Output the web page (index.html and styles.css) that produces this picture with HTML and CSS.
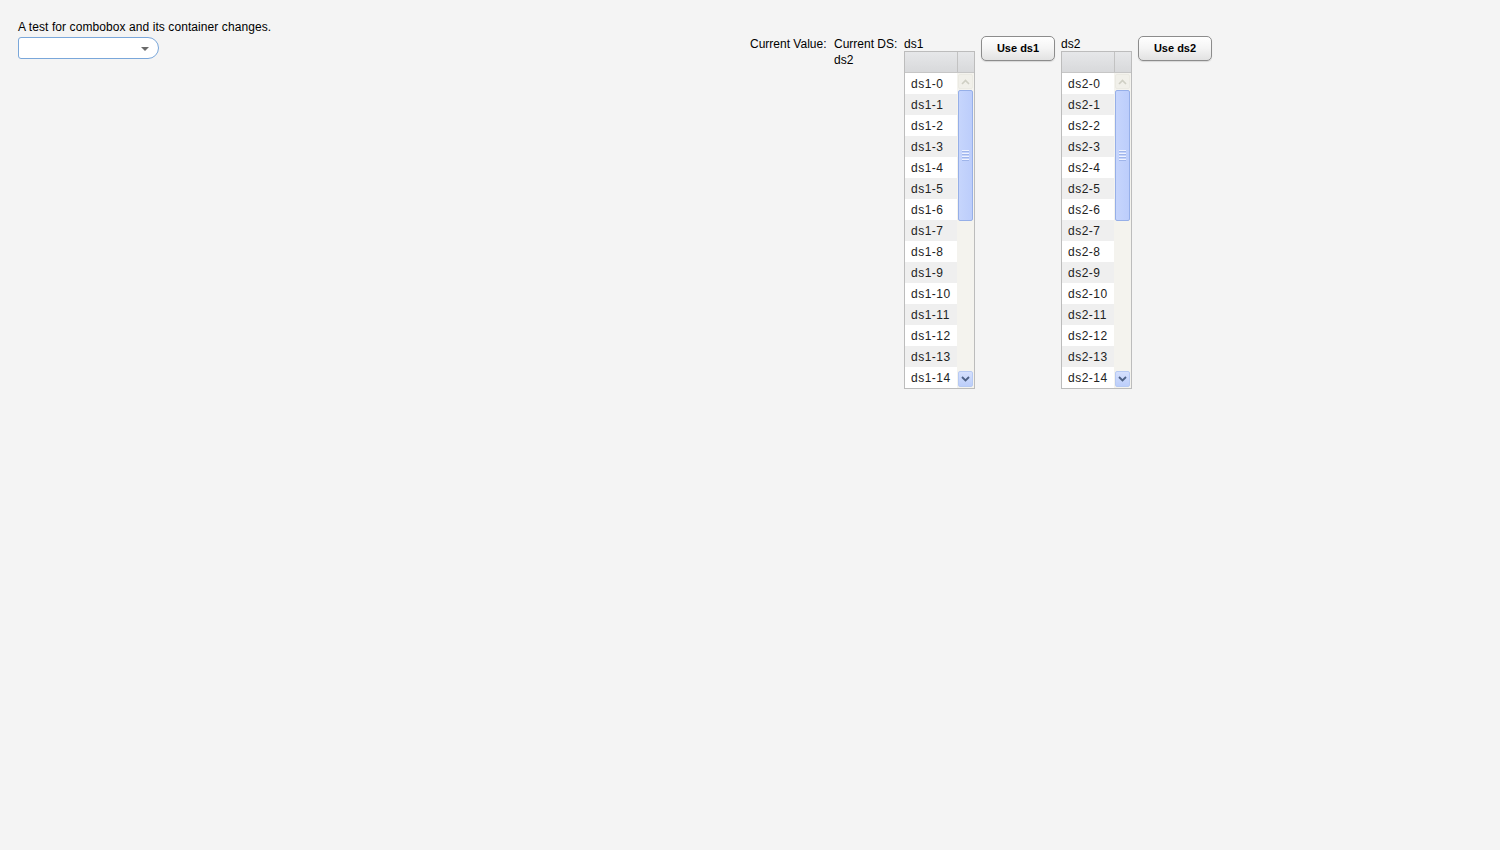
FILE: index.html
```html
<!DOCTYPE html>
<html>
<head>
<meta charset="utf-8">
<link rel="stylesheet" href="styles.css">
</head>
<body>
<div class="page">
  <div class="left">
    <div class="title">A test for combobox and its container changes.</div>
    <div class="combo">
      <div class="combo-input"></div>
      <div class="combo-arrow"><svg width="8" height="4" viewBox="0 0 8 4"><path d="M0 0H8L4 4Z" fill="#6a6a6a"/></svg></div>
    </div>
  </div>
  <div class="right">
    <div class="col-cv"><div class="lbl">Current Value:</div></div>
    <div class="col-ds"><div class="lbl">Current DS:</div><div class="lbl">ds2</div></div>
    <div class="col-list">
      <div class="lbl list-lbl">ds1</div>
      <div class="listbox">
        <div class="lb-head"><div class="lb-hcell"></div><div class="lb-hcorner"></div></div>
        <div class="lb-body">
          <div class="lb-rows">
            <div class="row">ds1-0</div><div class="row alt">ds1-1</div><div class="row">ds1-2</div><div class="row alt">ds1-3</div><div class="row">ds1-4</div><div class="row alt">ds1-5</div><div class="row">ds1-6</div><div class="row alt">ds1-7</div><div class="row">ds1-8</div><div class="row alt">ds1-9</div><div class="row">ds1-10</div><div class="row alt">ds1-11</div><div class="row">ds1-12</div><div class="row alt">ds1-13</div><div class="row">ds1-14</div>
          </div>
          <div class="vscroll">
            <div class="sb-up"><svg width="9" height="6" viewBox="0 0 9 6"><path d="M1 5L4.5 1.5L8 5" fill="none" stroke="#cfcfc4" stroke-width="1.6"/></svg></div>
            <div class="sb-thumb"><div class="grip"></div><div class="grip"></div><div class="grip"></div><div class="grip"></div></div>
            <div class="sb-fill"></div>
            <div class="sb-down"><svg width="9" height="6" viewBox="0 0 9 6"><path d="M1 1L4.5 4.5L8 1" fill="none" stroke="#4d6185" stroke-width="1.8"/></svg></div>
          </div>
        </div>
      </div>
    </div>
    <div class="col-btn"><div class="btn">Use ds1</div></div>
    <div class="col-list">
      <div class="lbl list-lbl">ds2</div>
      <div class="listbox">
        <div class="lb-head"><div class="lb-hcell"></div><div class="lb-hcorner"></div></div>
        <div class="lb-body">
          <div class="lb-rows">
            <div class="row">ds2-0</div><div class="row alt">ds2-1</div><div class="row">ds2-2</div><div class="row alt">ds2-3</div><div class="row">ds2-4</div><div class="row alt">ds2-5</div><div class="row">ds2-6</div><div class="row alt">ds2-7</div><div class="row">ds2-8</div><div class="row alt">ds2-9</div><div class="row">ds2-10</div><div class="row alt">ds2-11</div><div class="row">ds2-12</div><div class="row alt">ds2-13</div><div class="row">ds2-14</div>
          </div>
          <div class="vscroll">
            <div class="sb-up"><svg width="9" height="6" viewBox="0 0 9 6"><path d="M1 5L4.5 1.5L8 5" fill="none" stroke="#cfcfc4" stroke-width="1.6"/></svg></div>
            <div class="sb-thumb"><div class="grip"></div><div class="grip"></div><div class="grip"></div><div class="grip"></div></div>
            <div class="sb-fill"></div>
            <div class="sb-down"><svg width="9" height="6" viewBox="0 0 9 6"><path d="M1 1L4.5 4.5L8 1" fill="none" stroke="#4d6185" stroke-width="1.8"/></svg></div>
          </div>
        </div>
      </div>
    </div>
    <div class="col-btn"><div class="btn">Use ds2</div></div>
  </div>
</div>
</body>
</html>
```

FILE: styles.css
```css
html, body {
  margin: 0;
  padding: 0;
  background: #f4f4f4;
  font-family: "Liberation Sans", Arial, sans-serif;
  font-size: 12px;
  color: #000;
}
.page {
  display: grid;
  grid-template-columns: 750px 750px;
  padding-top: 19px;
}
.left {
  padding-left: 18px;
}
.title {
  line-height: 16px;
  letter-spacing: 0.08px;
}
.combo {
  margin-top: 2px;
  width: 139px;
  height: 20px;
  border: 1px solid #7aa7da;
  border-radius: 3px 11px 11px 3px;
  background: #fff;
  display: flex;
  align-items: center;
}
.combo-input {
  flex: 1;
}
.combo-arrow {
  width: 24px;
  display: flex;
  justify-content: center;
  padding-right: 1px;
  padding-top: 1px;
}
.combo-arrow svg {
  display: block;
}
.right {
  display: flex;
  align-items: flex-start;
  padding-top: 17px;
}
.lbl {
  line-height: 16px;
  white-space: nowrap;
}
.list-lbl {
  line-height: 14px;
  padding-top: 1px;
}
.col-cv {
  width: 84px;
}
.col-ds {
  width: 70px;
}
.col-list {
  width: 77px;
}
.col-btn {
  width: 80px;
}
.btn {
  width: 72px;
  height: 23px;
  border: 1px solid #8c8c8c;
  border-radius: 5px;
  background: linear-gradient(#ffffff, #f4f4f4 50%, #e2e2e2);
  box-shadow: 0 1px 1px rgba(0,0,0,0.12);
  font-size: 11px;
  font-weight: bold;
  line-height: 23px;
  text-align: center;
  color: #000;
}
.listbox {
  width: 69px;
  border: 1px solid #bcbcbc;
  background: #fff;
}
.lb-head {
  display: flex;
  height: 20px;
  border-bottom: 1px solid #c6c6c6;
  background: linear-gradient(#e6e7e9, #d8d9db);
}
.lb-hcell {
  width: 52px;
  border-right: 1px solid #c2c2c2;
}
.lb-hcorner {
  flex: 1;
}
.lb-body {
  display: flex;
  height: 315px;
}
.lb-rows {
  width: 52px;
}
.row {
  height: 21px;
  line-height: 22px;
  padding-left: 6px;
  letter-spacing: 0.5px;
  color: #222;
  background: #fff;
}
.row.alt {
  background: #efefef;
}
.vscroll {
  width: 17px;
  display: flex;
  flex-direction: column;
  background: #f4f3ee;
}
.sb-up, .sb-down {
  margin: 1px;
  display: flex;
  align-items: center;
  justify-content: center;
  border-radius: 2px;
}
.sb-up {
  border: 1px solid #ebeae3;
  height: 13px;
  width: 13px;
  background: #f1f0ea;
}
.sb-down {
  border: 1px solid #b7caf3;
  height: 14px;
  width: 13px;
  background: linear-gradient(#d5e0fd, #bccefa);
  margin-top: 0;
}
.sb-thumb {
  height: 129px;
  margin: 0 1px;
  border: 1px solid #96afe8;
  border-radius: 2px;
  background: linear-gradient(90deg, #c6d5fc, #bccdfb);
  display: flex;
  flex-direction: column;
  align-items: center;
  justify-content: center;
  gap: 1px;
}
.grip {
  width: 7px;
  height: 1px;
  background: #eef2fe;
  border-bottom: 1px solid #9fb5ea;
}
.sb-fill {
  flex: 1;
}
```
